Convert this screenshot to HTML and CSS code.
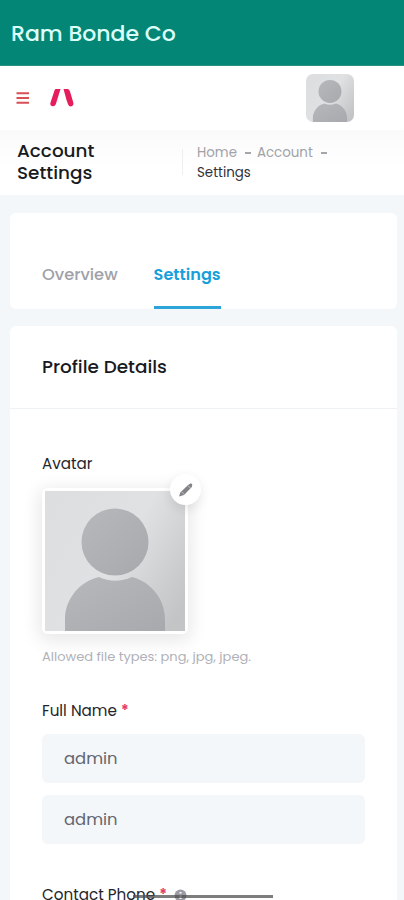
FILE: index.html
```html
<!DOCTYPE html>
<html lang="en">
<head>
<meta charset="utf-8">
<meta name="viewport" content="width=device-width, initial-scale=1">
<title>Account Settings</title>
<link rel="stylesheet" href="styles.css">
</head>
<body>
<svg width="0" height="0" class="defs" aria-hidden="true">
  <defs>
    <linearGradient id="bg" x1="0" y1="0.2" x2="1" y2="0.8">
      <stop offset="0" stop-color="#dcdee0"/><stop offset="0.5" stop-color="#dfe1e3"/><stop offset="1" stop-color="#c2c4c6"/>
    </linearGradient>
    <linearGradient id="fg" x1="0" y1="0" x2="1" y2="1">
      <stop offset="0" stop-color="#b7b8bc"/><stop offset="1" stop-color="#a8a9ac"/>
    </linearGradient>
    <symbol id="person" viewBox="0 0 140 140">
      <rect width="140" height="140" fill="url(#bg)"/>
      <circle cx="70" cy="51" r="33.500" fill="url(#fg)"/>
      <path d="M20 140V128C20 108 35 90 54 86Q70 93.500 87 86C106 91 120 108 120 128V140Z" fill="url(#fg)"/>
    </symbol>
  </defs>
</svg>
<div class="screen">
  <header class="appbar"><span>Ram Bonde Co</span></header>
  <div class="toolbar">
    <svg class="menu" width="13" height="13" viewBox="0 0 13 13"><path d="M0.500 1.200H13M0.500 6H13M0.500 10.800H13" stroke="#d84f55" stroke-width="2"/></svg>
    <svg class="logo" width="26" height="20" viewBox="0 0 26 20"><path d="M6.500 1H11.500L6.800 16.200Q6 18.600 3.500 18.300Q0.500 17.500 1.500 14.500L5 4Q5.500 1.500 6.500 1ZM14.500 1H19Q20.500 1.500 21 3.500L24.300 14.500Q25 17.500 22.500 18.300Q20 18.800 19 16.200L17.500 12Z" fill="#e51d5c"/></svg>
    <svg class="user" width="48" height="48"><use href="#person"/></svg>
  </div>
  <div class="titlebar">
    <h1>Account<br>Settings</h1>
    <div class="crumbs"><div class="trail"><span>Home</span><span class="dash"></span><span>Account</span><span class="dash"></span></div><div class="here">Settings</div></div>
  </div>
  <nav class="card tabs">
    <a class="tab">Overview</a>
    <a class="tab active">Settings</a>
  </nav>
  <main class="card details">
    <div class="card-head"><h2>Profile Details</h2></div>
    <div class="form">
      <div class="label">Avatar</div>
      <div class="avatar">
        <svg width="140" height="140"><use href="#person"/></svg>
        <span class="edit"><svg width="16" height="16" viewBox="0 0 16 16"><path d="M1 14.500L2.300 10.500L10 3L13 1.300L14.300 2.500L13.800 5L6 13Z" fill="#838387"/><path d="M9.800 3.500L12.500 6.300M3.500 9.800L6.200 12.500" stroke="#d5d5d7" stroke-width=".8"/></svg></span>
      </div>
      <div class="hint">Allowed file types: png, jpg, jpeg.</div>
      <div class="label name"><span>Full Name</span><span class="req">*</span></div>
      <div class="field">admin</div>
      <div class="field">admin</div>
      <div class="label phone"><span>Contact Phone</span><span class="req">*</span><svg class="info" width="13" height="13" viewBox="0 0 13 13"><circle cx="6.500" cy="6.500" r="6" fill="#9c9ba4"/><path d="M6.500 3V4.500M6.500 6V10" stroke="#fff" stroke-width="2"/></svg></div>
    </div>
  </main>
  <div class="gesture"></div>
</div>
</body>
</html>
```
FILE: styles.css
```css
* { box-sizing: border-box; }
body { margin: 0; background: #f3f7fa; font-family: Poppins, Inter, sans-serif; font-feature-settings: "cv11" 1; color: #24252b; }
.defs { position: absolute; }
.screen { position: relative; width: 404px; height: 900px; overflow: hidden; background: #f3f7fa; }
.screen span { white-space: nowrap; }
.appbar { height: 66px; background: #038675; border-bottom: 1px solid #2b9184; padding: 3px 0 0 11px; display: flex; align-items: center; color: #dcfffa; font-size: 22px; font-weight: 500; line-height: 30px; }
.toolbar { height: 64px; background: #fff; display: flex; align-items: center; padding: 0 50px 0 16px; }
.logo { margin-left: 20px; }
.user { margin-left: auto; border-radius: 7px; }
.titlebar { height: 65px; background: linear-gradient(#fafafa, #fff 60%); display: flex; padding: 10px 0 0 17px; }
h1, h2 { margin: 0; color: #181a21; }
h1 { width: 165px; height: 44px; font-size: 18.4px; line-height: 22px; font-weight: 500; }
.crumbs { border-left: 1px solid #eeeff1; height: 26px; margin-top: 9px; padding-left: 14px; font-size: 13.4px; line-height: 20px; }
.trail { margin-top: -6px; display: flex; align-items: center; color: #a1a2a8; }
.dash { width: 6px; height: 1.500px; background: #a5a6ac; margin: 0 6px 0 8px; }
.here { color: #303138; }
.card { background: #fff; border-radius: 6px; margin: 18px 7px 0 10px; }
.tabs { height: 96px; display: flex; align-items: flex-end; padding-left: 32px; gap: 36px; }
.tab { height: 46px; font-size: 16.3px; line-height: 24px; font-weight: 500; color: #a0a1a8; }
.active { color: #189fda; font-size: 16.1px; font-weight: 600; border-bottom: 3px solid #2ba5d7; }
.details { margin-top: 17px; height: 590px; }
.card-head { height: 83px; border-bottom: 1px solid #eff2f4; padding: 29px 0 0 32px; }
h2 { font-size: 18.4px; line-height: 24px; font-weight: 500; }
.form { padding: 45px 32px 0; }
.label { height: 20px; display: flex; align-items: center; font-size: 15.2px; line-height: 20px; }
.avatar { position: relative; width: 146px; height: 146px; margin-top: 14px; border: 3px solid #fff; border-radius: 6px; box-shadow: 0 4px 18px 3px #00000018; }
.avatar > svg { display: block; }
.edit { position: absolute; left: 125px; top: -17px; width: 31px; height: 31px; border-radius: 50%; background: #fff; box-shadow: 0 4px 12px #00000018; display: flex; align-items: center; justify-content: center; }
.hint { height: 20px; margin-top: 13px; font-size: 13px; line-height: 20px; color: #b0b1b8; }
.name { margin-top: 34px; }
.req { color: #e23568; margin-left: 4px; font-size: 15px; font-weight: 600; }
.field { height: 49px; margin-top: 12px; width: 323px; border-radius: 6px; background: #f3f7fa; padding: 13px 22px; font-size: 16.4px; line-height: 24px; color: #64656e; }
.name + .field { margin-top: 13px; }
.phone { margin-top: 41px; }
.info { margin-left: 7px; }
.gesture { position: absolute; left: 133px; top: 895px; width: 140px; height: 3px; background: #4b4b4bb8; }
```
